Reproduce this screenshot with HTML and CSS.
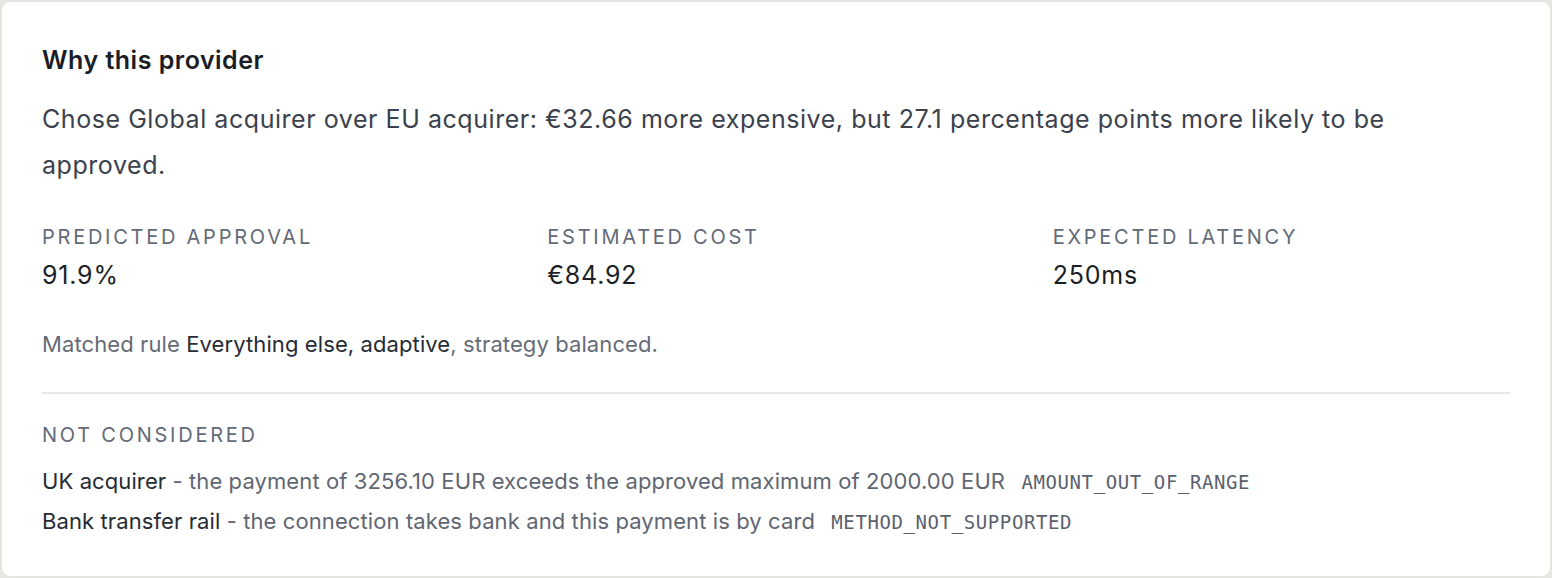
FILE: index.html
```html
<!DOCTYPE html>
<html lang="en">
<head>
<meta charset="utf-8">
<title>Why this provider</title>
<link rel="stylesheet" href="styles.css">
</head>
<body>
<section class="card">
  <h2 class="title">Why this provider</h2>
  <p class="summary">Chose Global acquirer over EU acquirer: €32.66 more expensive, but 27.1 percentage points more likely to be approved.</p>
  <div class="stats">
    <div class="stat">
      <div class="label">Predicted approval</div>
      <div class="value">91.9%</div>
    </div>
    <div class="stat">
      <div class="label">Estimated cost</div>
      <div class="value">€84.92</div>
    </div>
    <div class="stat">
      <div class="label">Expected latency</div>
      <div class="value">250ms</div>
    </div>
  </div>
  <p class="rule">Matched rule <span class="strong">Everything else, adaptive</span>, strategy balanced.</p>
  <div class="excluded">
    <div class="label">Not considered</div>
    <ul class="reasons">
      <li><span class="strong">UK acquirer</span> - the payment of 3256.10 EUR exceeds the approved maximum of 2000.00 EUR <code class="code">AMOUNT_OUT_OF_RANGE</code></li>
      <li><span class="strong">Bank transfer rail</span> - the connection takes bank and this payment is by card <code class="code">METHOD_NOT_SUPPORTED</code></li>
    </ul>
  </div>
</section>
</body>
</html>
```

FILE: styles.css
```css
* { box-sizing: border-box; }
html, body { margin: 0; padding: 0; }
body {
  background: #e9e7e1;
  font-family: Inter, "Liberation Sans", sans-serif;
  color: #1b1f27;
  width: 1552px;
  height: 578px;
}
.card {
  background: #fff;
  border: 2px solid #e6e4de;
  border-radius: 10px;
  padding: 40px 40px 34px;
  height: 578px;
}
.title {
  margin: 0;
  font-size: 25px;
  line-height: 36px;
  font-weight: 600;
  color: #1a1d24;
  letter-spacing: 0.5px;
}
.summary {
  margin: 18px 0 0;
  font-size: 25px;
  line-height: 46px;
  color: #3b414d;
  letter-spacing: 0.55px;
  max-width: 1420px;
}
.stats {
  margin-top: 35px;
  display: grid;
  grid-template-columns: repeat(3, 1fr);
  gap: 48px;
}
.label {
  font-size: 20px;
  line-height: 28px;
  text-transform: uppercase;
  letter-spacing: 2.75px;
  color: #636a77;
}
.value {
  margin-top: 6px;
  font-size: 25px;
  line-height: 36px;
  color: #1b1f27;
  letter-spacing: 0.8px;
}
.rule {
  margin: 36px 0 0;
  font-size: 22px;
  line-height: 30px;
  color: #656c78;
  letter-spacing: 0.1px;
}
.strong { color: #262b34; }
.excluded {
  margin-top: 33px;
  border-top: 2px solid #e8e7e3;
  padding-top: 27px;
}
.reasons {
  list-style: none;
  margin: 16px 0 0;
  padding: 0;
  display: flex;
  flex-direction: column;
  gap: 7px;
}
.reasons li {
  font-size: 22px;
  line-height: 32px;
  color: #5f6672;
  letter-spacing: 0.1px;
}
.code {
  font-family: "DejaVu Sans Mono", "Liberation Mono", monospace;
  font-size: 19px;
  color: #5b616c;
  margin-left: 10px;
  letter-spacing: 0.6px;
}
```
